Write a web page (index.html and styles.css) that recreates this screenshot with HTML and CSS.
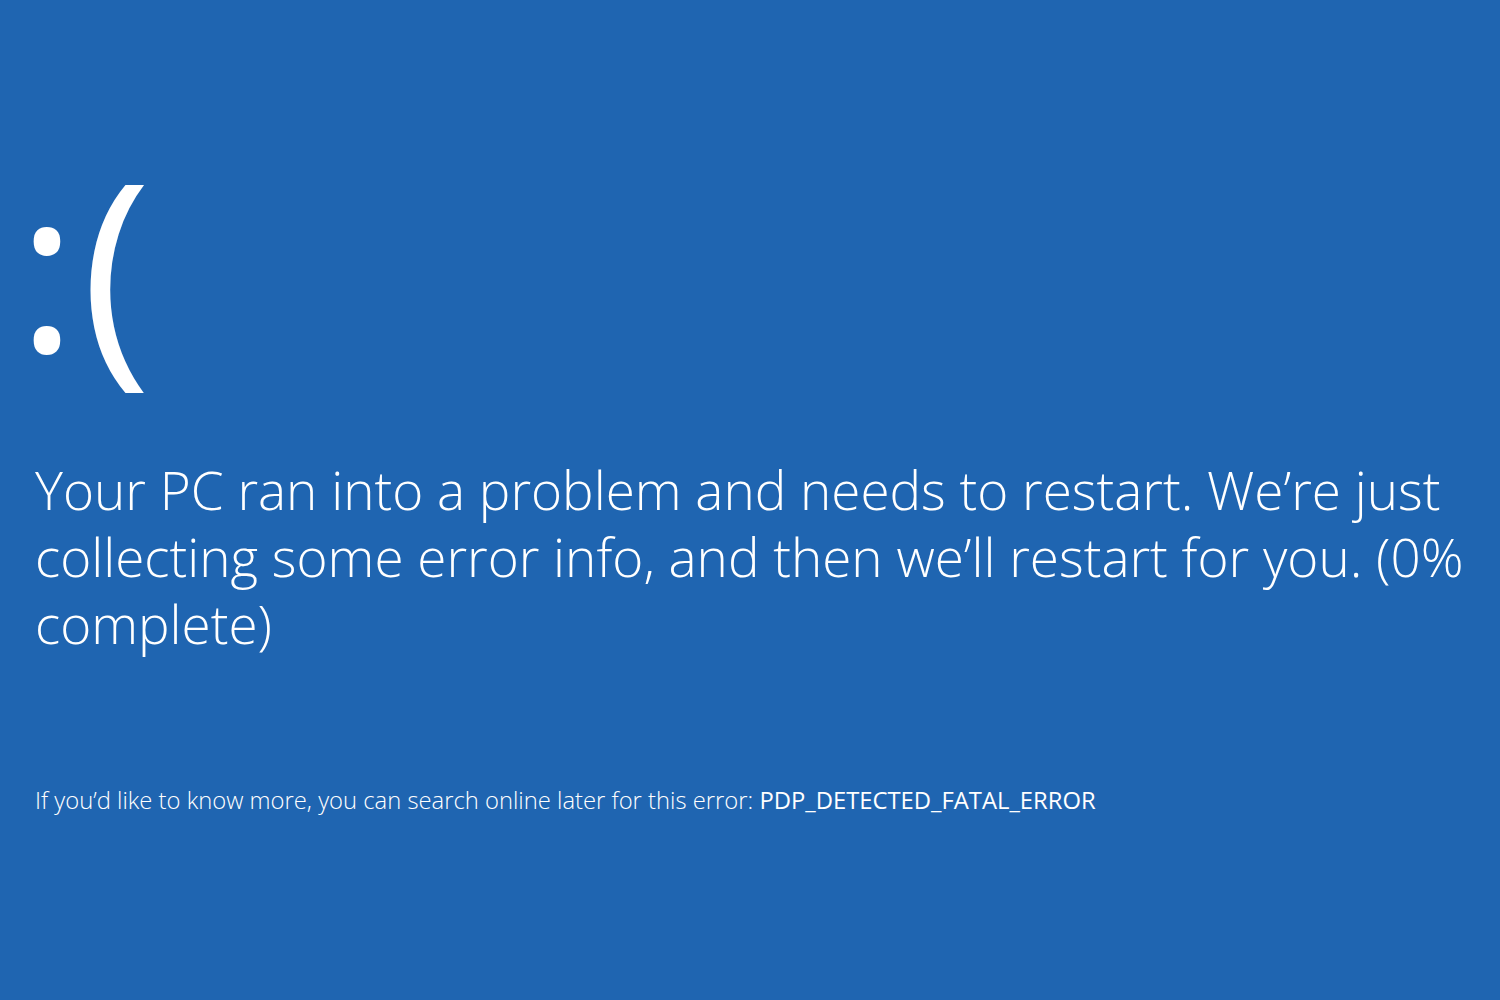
FILE: index.html
```html
<!DOCTYPE html>
<html lang="en">
<head>
    <meta charset="UTF-8">
    <meta name="viewport" content="width=device-width, initial-scale=1.0">
    <title>Your PC ran into a problem</title>
    <link rel="stylesheet" href="styles.css">
</head>
<body>
    <div class="screen">
        <div class="face"><span class="eyes">:</span><span class="mouth">(</span></div>
        <p class="message">Your PC ran into a problem and needs to restart. We’re just collecting some error info, and then we’ll restart for you. (0% complete)</p>
        <p class="details">If you’d like to know more, you can search online later for this error: <span class="code">PDP_DETECTED_FATAL_ERROR</span></p>
    </div>
</body>
</html>
```

FILE: styles.css
```css
html, body {
    margin: 0;
    height: 100%;
}
body {
    background-color: #1f65b1;
    color: #fff;
    font-family: "Open Sans", "Liberation Sans", sans-serif;
    font-weight: 300;
}
.screen {
    padding: 143px 30px 0 35px;
}
.face {
    font-size: 238px;
    font-weight: 400;
    line-height: 240px;
    margin-left: -18px;
}
.eyes {
    font-size: 228px;
    vertical-align: 3px;
}
.mouth {
    margin-left: 4px;
}
.message {
    font-size: 53px;
    line-height: 67px;
    margin: 72px 0 0 0;
    max-width: 1445px;
}
.details {
    font-size: 23.8px;
    margin: 127px 0 0 0;
}
.code {
    font-weight: 400;
}
```
